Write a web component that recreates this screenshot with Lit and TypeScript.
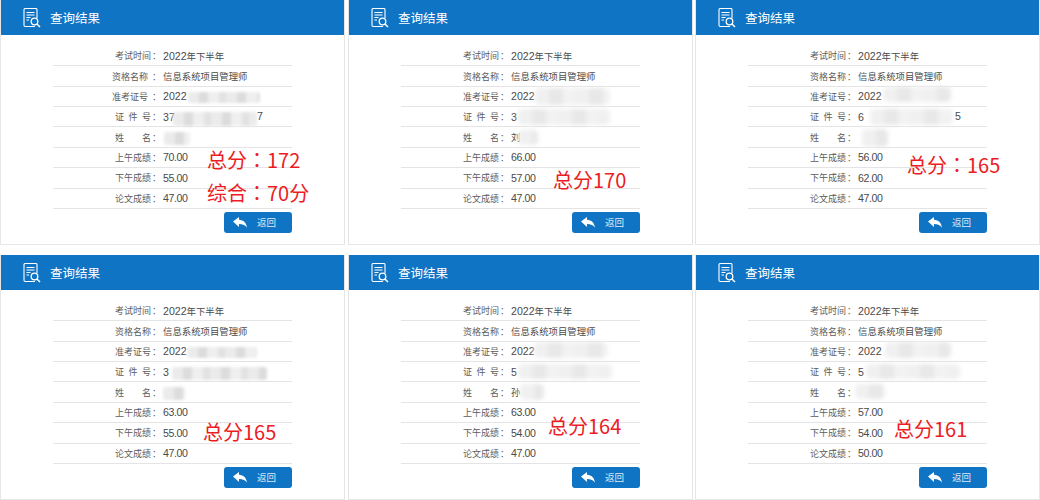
import { LitElement, html, css } from "lit";
import { customElement } from "lit/decorators.js";

type Box = [number, number, number, number];
interface Panel {
  cert: string; certEnd: string; tailX: number; name: string; am: string; pm: string; essay: string; dx: number; soft: boolean;
  blurs: Box[]; notes: { text: string; x: number; y: number }[];
}

const panels: Panel[] = [
  { cert: "37", certEnd: "7", tailX: 256, name: "", am: "70.00", pm: "55.00", essay: "47.00", dx: -3, soft: false,
    blurs: [[188, 92, 72, 11], [173, 112, 84, 14], [164, 132, 26, 13]],
    notes: [{ text: "总分：172", x: 208, y: 146 }, { text: "综合：70分", x: 208, y: 179 }] },
  { cert: "3", certEnd: "", tailX: 0, name: "刘", am: "66.00", pm: "57.00", essay: "47.00", dx: 0, soft: true,
    blurs: [[187, 88, 75, 17], [170, 109, 92, 16], [170, 130, 20, 15]],
    notes: [{ text: "总分170", x: 206, y: 166 }] },
  { cert: "6", certEnd: "5", tailX: 259, name: "", am: "56.00", pm: "62.00", essay: "47.00", dx: 0, soft: true,
    blurs: [[188, 87, 68, 15], [175, 109, 83, 16], [167, 129, 26, 18]],
    notes: [{ text: "总分：165", x: 213, y: 151 }] },
  { cert: "3", certEnd: "", tailX: 0, name: "", am: "63.00", pm: "55.00", essay: "47.00", dx: 0, soft: false,
    blurs: [[187, 92, 70, 11], [172, 112, 95, 13], [163, 132, 22, 13]],
    notes: [{ text: "总分165", x: 204, y: 163 }] },
  { cert: "5", certEnd: "", tailX: 0, name: "孙", am: "63.00", pm: "54.00", essay: "47.00", dx: 0, soft: true,
    blurs: [[186, 87, 74, 16], [170, 109, 94, 15], [172, 129, 24, 16]],
    notes: [{ text: "总分164", x: 201, y: 157 }] },
  { cert: "5", certEnd: "", tailX: 0, name: "", am: "57.00", pm: "54.00", essay: "50.00", dx: 0, soft: true,
    blurs: [[190, 87, 66, 16], [171, 109, 94, 15], [160, 129, 30, 15]],
    notes: [{ text: "总分161", x: 200, y: 160 }] },
];

@customElement("app-root")
export class AppRoot extends LitElement {
  static styles = css`
    :host { display: block; width: 1040px; height: 500px; background: #fff; overflow: hidden;
      font-family: "Noto Sans CJK SC", "Liberation Sans", sans-serif; }
    .grid { display: grid; grid-template-columns: 348px 347px 345px; grid-auto-rows: 245px; row-gap: 10px; }
    .panel { position: relative; width: 345px; height: 245px; box-sizing: border-box; overflow: hidden;
      border: 1px solid #e6e6e6; border-top: 0; display: flex; flex-direction: column; }
    .head { height: 35px; margin: 0 -1px; flex: none; background: #1074c4; color: #fff; display: flex; align-items: center;
      padding-left: 23px; gap: 9px; font-size: 12.5px; }
    .head svg { width: 18px; height: 20px; flex: none; }
    .body { padding: 11px 52px 0; display: flex; flex-direction: column; }
    .row { height: 20.36px; box-sizing: border-box; border-bottom: 1px solid #e4e4e4; display: flex; align-items: center;
      color: #5c5c5c; font-size: 9px; }
    .labelcell { width: 98px; box-sizing: border-box; display: flex; justify-content: flex-end; flex: none; }
    .label { width: 36px; text-align: justify; text-align-last: justify; flex: none; }
    .colon { width: 12px; padding-left: 1px; box-sizing: border-box; flex: none; }
    .value { font-size: 9.4px; color: #4a4a4a; white-space: pre; }
    .num { font-family: "Liberation Sans", sans-serif; font-size: 10.6px; }
    .num.score { letter-spacing: -0.4px; }
    .tail { position: absolute; font-family: "Liberation Sans", sans-serif; font-size: 10.6px; color: #4a4a4a; top: 110px; }
    .actions { display: flex; justify-content: flex-end; margin-top: 3px; }
    .btn { width: 68px; height: 21px; border-radius: 3px; background: #1074c4; color: #dfeaf5; font-size: 9.5px;
      display: flex; align-items: center; padding-left: 9px; gap: 10px; box-sizing: border-box; }
    .btn svg { width: 14px; height: 11px; flex: none; }
    .blur { position: absolute; filter: blur(1.4px); border-radius: 3px;
      background: repeating-linear-gradient(90deg, #ebebeb 0 11px, #dcdcdc 11px 20px, #efefef 20px 31px, #e2e2e2 31px 38px); }
    .blur.soft { filter: blur(2px); border-radius: 5px;
      background: repeating-linear-gradient(90deg, #f0f0f0 0 14px, #e8e8e8 14px 28px, #f2f2f2 28px 40px); }
    .note { position: absolute; color: #ec1c24; font-size: 20px; line-height: 28px; white-space: nowrap; }
    .tc { font-family: "Noto Sans CJK TC", sans-serif; }
  `;

  private val(v: string) {
    return v.split(/(\d[\d.]*)/).map((p, i) =>
      i % 2 ? html`<span class="num ${p.includes(".") ? "score" : ""}">${p}</span>` : p);
  }

  private note(text: string) {
    return text.split(/(：)/).map((p, i) => (i % 2 ? html`<span class="tc">${p}</span>` : p));
  }

  private row(label: string, value: string, dx = 0) {
    return html`<div class="row">
      <div class="labelcell" style="padding-right:${-dx}px"><span class="label">${label}</span></div>
      <span class="colon">：</span><span class="value">${this.val(value)}</span>
    </div>`;
  }

  private icon() {
    return html`<svg viewBox="0 0 18 20" fill="none" stroke="#fff" stroke-width="1.1">
      <path d="M12 18.5H2.2A1.2 1.2 0 0 1 1 17.3V1.7A1.2 1.2 0 0 1 2.2.5h10.6A1.2 1.2 0 0 1 14 1.7V10"/>
      <path d="M3.5 4.5h8M3.5 7h8M3.5 9.5h4M3.5 12h2.5" stroke-width="1.2"/>
      <circle cx="11.5" cy="13.5" r="3.3" stroke-width="1.3"/>
      <path d="M14 16l3 3" stroke-width="1.5"/>
    </svg>`;
  }

  private card(p: Panel) {
    return html`<section class="panel">
      <header class="head">${this.icon()}<span>查询结果</span></header>
      <div class="body">
        ${this.row("考试时间", "2022年下半年")}
        ${this.row("资格名称", "信息系统项目管理师", p.dx)}
        ${this.row("准考证号", "2022", p.dx)}
        ${this.row("证 件 号", p.cert)}
        ${this.row("姓 名", p.name)}
        ${this.row("上午成绩", p.am)}
        ${this.row("下午成绩", p.pm)}
        ${this.row("论文成绩", p.essay)}
        <div class="actions">
          <div class="btn">
            <svg viewBox="0 0 14 11"><path fill="#fff" d="M0 4.6 6 0v2.8c4.6.2 7.4 3 8 8-1.6-2.7-4-3.8-8-3.8v3z"/></svg>
            <span>返回</span>
          </div>
        </div>
      </div>
      ${p.blurs.map(([x, y, w, h]) => html`<div class="blur ${p.soft ? "soft" : ""}" style="left:${x - 1}px;top:${y}px;width:${w}px;height:${h}px"></div>`)}
      ${p.certEnd ? html`<span class="tail" style="left:${p.tailX}px">${p.certEnd}</span>` : ""}
      ${p.notes.map((n) => html`<div class="note" style="left:${n.x - 2}px;top:${n.y}px">${this.note(n.text)}</div>`)}
    </section>`;
  }

  render() {
    return html`<div class="grid">${panels.map((p) => this.card(p))}</div>`;
  }
}
